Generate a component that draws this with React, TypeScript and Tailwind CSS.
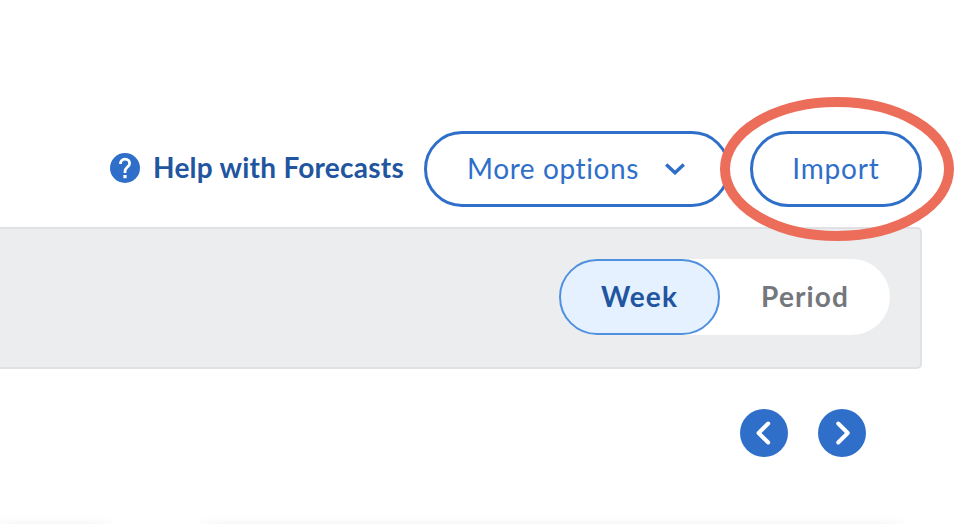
import React, { useState } from 'react';

const views = [
  { id: 'week', label: 'Week', width: 'w-[161px]', tracking: 'tracking-[1.1px]' },
  { id: 'period', label: 'Period', width: 'w-[170px]', tracking: 'tracking-[1.1px]' },
];

const HelpLink = () => (
  <a href="#" className="flex items-center mr-[20px] pb-0.5 text-[#2255a0]">
    <svg className="w-[30px] h-[30px] mr-[13px]" viewBox="0 0 30 30" fill="none">
      <circle cx="15" cy="15" r="15" fill="#2f6fc9" />
      <path
        d="M10.4 11C10.4 8 12.4 6.2 15 6.2C17.7 6.2 19.6 8 19.6 10.4C19.6 14 15 14.2 15 18.5V20"
        stroke="#fff"
        strokeWidth="2.8"
      />
      <rect x="13.4" y="22" width="3.2" height="3.2" fill="#fff" />
    </svg>
    <span className="w-[251px] pb-0.5 text-[28px] leading-none font-bold tracking-[0.26px] whitespace-nowrap">
      Help with Forecasts
    </span>
  </a>
);

const App = () => {
  const [view, setView] = useState('week');

  return (
    <div className="relative w-[970px] h-[524px] overflow-hidden bg-white pt-[131px] font-['Lato',sans-serif]">
      {/* Toolbar */}
      <div className="flex justify-end items-center h-[76px] pr-12">
        <HelpLink />
        <button className="flex items-center w-[306px] h-[76px] pl-10 mr-5 rounded-full border-3 border-[#2f6fc9] text-[#2f6fc9] text-[28px] leading-none">
          <span className="w-[198px] pb-0.5 text-left tracking-[0.6px] whitespace-nowrap">More options</span>
          <svg className="w-5 h-3" viewBox="0 0 20 12" fill="none">
            <path d="M1.2 1.4L10 9.8L18.8 1.4" stroke="currentColor" strokeWidth="3.4" />
          </svg>
        </button>
        <button className="w-[172px] h-[76px] pb-0.5 rounded-full border-3 border-[#2f6fc9] text-[#2f6fc9] text-[28px] leading-none tracking-[0.8px]">
          Import
        </button>
      </div>

      {/* View switch */}
      <div className="flex justify-end items-start mt-5 mr-12 h-[142px] pt-[30px] pr-[30px] bg-[#ecedef] border-2 border-l-0 border-[#e0e1e5] rounded-r-[5px]">
        <div className="flex h-[76px] rounded-full bg-white">
          {views.map((v) => (
            <button
              key={v.id}
              onClick={() => setView(v.id)}
              className={`h-[76px] pb-0.5 rounded-full text-[28px] leading-none font-bold ${v.width} ${v.tracking} ${
                view === v.id ? 'bg-[#e5f1fe] border-2 border-[#4f90df] text-[#2255a0]' : 'text-[#74777b]'
              }`}
            >
              {v.label}
            </button>
          ))}
        </div>
      </div>

      {/* Paging */}
      <div className="flex justify-end gap-[30px] mt-10 pr-[104px]">
        <button aria-label="Previous" className="w-12 h-12 rounded-full bg-[#2f6fc9]">
          <svg viewBox="0 0 48 48" fill="none" stroke="#fff" strokeWidth="4" strokeLinecap="round" strokeLinejoin="round">
            <path d="M28.2 14.5L18.6 24L28.2 33.5" />
          </svg>
        </button>
        <button aria-label="Next" className="w-12 h-12 rounded-full bg-[#2f6fc9]">
          <svg viewBox="0 0 48 48" fill="none" stroke="#fff" strokeWidth="4" strokeLinecap="round" strokeLinejoin="round">
            <path d="M20.2 14.5L29.8 24L20.2 33.5" />
          </svg>
        </button>
      </div>

      {/* Cards start just below the fold, only their shadow shows */}
      <div className="flex gap-[96px] mt-[71px]">
        <div className="w-[108px] h-20 shadow-[0_0_16px_rgba(0,0,0,0.09)]" />
        <div className="w-[696px] h-20 shadow-[0_0_16px_rgba(0,0,0,0.09)]" />
      </div>

      {/* Highlight ring */}
      <svg className="absolute left-[720px] top-[97px] w-[234px] h-[144px] pointer-events-none" viewBox="0 0 234 144" fill="none">
        <ellipse cx="117" cy="72" rx="112" ry="67" stroke="#ed6d5b" strokeWidth="10" />
      </svg>
    </div>
  );
};

export default App;
